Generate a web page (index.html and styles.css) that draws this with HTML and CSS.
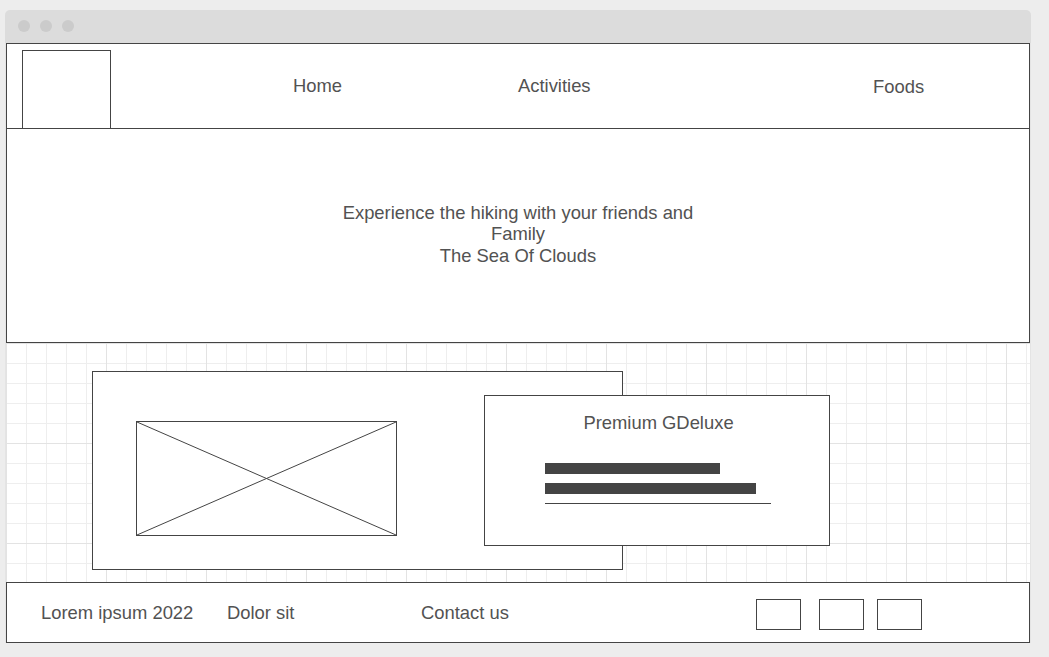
FILE: index.html
```html
<!DOCTYPE html>
<html lang="en">
<head>
<meta charset="utf-8">
<title>The Sea Of Clouds</title>
<link rel="stylesheet" href="styles.css">
</head>
<body>
<div class="window">
  <div class="titlebar">
    <span class="dot"></span><span class="dot"></span><span class="dot"></span>
  </div>
  <div class="canvas">
    <header class="header">
      <div class="logo"></div>
      <nav class="nav">
        <span class="nav-item nav-home">Home</span>
        <span class="nav-item nav-activities">Activities</span>
        <span class="nav-item nav-foods">Foods</span>
      </nav>
    </header>
    <section class="hero">
      <p class="hero-text">Experience the hiking with your friends and<br>Family<br>The Sea Of Clouds</p>
    </section>
    <section class="stage">
      <div class="feature">
        <div class="placeholder">
          <svg class="cross" viewBox="0 0 100 100" preserveAspectRatio="none">
            <line x1="0" y1="0" x2="100" y2="100" vector-effect="non-scaling-stroke"/>
            <line x1="100" y1="0" x2="0" y2="100" vector-effect="non-scaling-stroke"/>
          </svg>
        </div>
      </div>
      <div class="card">
        <h2 class="card-title">Premium GDeluxe</h2>
        <div class="bar bar-short"></div>
        <div class="bar bar-long"></div>
        <div class="rule"></div>
      </div>
    </section>
    <footer class="footer">
      <span class="foot-item foot-lorem">Lorem ipsum 2022</span>
      <span class="foot-item foot-dolor">Dolor sit</span>
      <span class="foot-item foot-contact">Contact us</span>
      <div class="social">
        <span class="social-box"></span>
        <span class="social-box"></span>
        <span class="social-box"></span>
      </div>
    </footer>
  </div>
</div>
</body>
</html>
```
FILE: styles.css
```css
html, body {
  margin: 0;
  background: #ededed;
}
body {
  padding-top: 10px;
  height: 657px;
  box-sizing: border-box;
  overflow: hidden;
  font-family: "Liberation Sans", Arial, sans-serif;
  color: #525252;
  font-size: 18.4px;
}
.window {
  margin-left: 5px;
  width: 1026px;
}
.titlebar {
  height: 33px;
  background: #dcdcdc;
  border-radius: 5px 5px 0 0;
  display: flex;
  align-items: flex-start;
  gap: 10px;
  padding: 10px 0 0 13px;
  box-sizing: border-box;
}
.dot {
  width: 12px;
  height: 12px;
  border-radius: 50%;
  background: #cbcbcb;
}
.canvas {
  border-left: 1px solid #e4e4e4;
  border-right: 1px solid #e4e4e4;
  background-color: #fff;
  background-image:
    linear-gradient(to right, #e3e3e3 1px, transparent 1px),
    linear-gradient(to bottom, #e3e3e3 1px, transparent 1px),
    linear-gradient(to right, #eeeeee 1px, transparent 1px),
    linear-gradient(to bottom, #eeeeee 1px, transparent 1px);
  background-size: 100px 100px, 100px 100px, 20px 20px, 20px 20px;
}
.header {
  height: 86px;
  box-sizing: border-box;
  border: 1px solid #444;
  background: #fff;
  display: flex;
  align-items: flex-start;
}
.logo {
  margin: 6px 0 0 15px;
  width: 89px;
  height: 78px;
  box-sizing: border-box;
  border: 1px solid #444;
  border-bottom: none;
  flex: none;
}
.nav {
  align-self: center;
  display: flex;
  line-height: 20px;
  margin-top: 1px;
}
.nav-item { flex: none; }
.nav-home { margin-left: 182px; width: 48px; }
.nav-activities { margin-left: 177px; width: 73px; }
.nav-foods { margin-left: 282px; padding-top: 1px; }
.hero {
  height: 214px;
  box-sizing: border-box;
  border: 1px solid #444;
  border-top: none;
  background: #fff;
  display: flex;
  align-items: center;
  justify-content: center;
}
.hero-text {
  margin: 0;
  text-align: center;
  line-height: 21.5px;
  padding-bottom: 3px;
}
.stage {
  height: 239px;
  box-sizing: border-box;
  display: flex;
  align-items: flex-start;
  padding: 28px 0 0 86px;
}
.feature {
  width: 531px;
  height: 199px;
  box-sizing: border-box;
  border: 1px solid #444;
  background: #fff;
  padding: 49px 0 0 43px;
  flex: none;
}
.placeholder {
  width: 261px;
  height: 115px;
  box-sizing: border-box;
  border: 1px solid #444;
}
.cross {
  display: block;
  width: 100%;
  height: 100%;
  stroke: #444;
  stroke-width: 1;
}
.card {
  position: relative;
  margin: 24px 0 0 -139px;
  width: 346px;
  height: 151px;
  box-sizing: border-box;
  border: 1px solid #444;
  background: #fff;
  padding-top: 17px;
  flex: none;
}
.card-title {
  margin: 0;
  padding-left: 3px;
  font-size: 18.4px;
  font-weight: normal;
  line-height: 20px;
  text-align: center;
}
.bar {
  height: 11px;
  background: #444;
  margin-left: 60px;
}
.bar-short { width: 175px; margin-top: 30px; }
.bar-long { width: 211px; margin-top: 9px; }
.rule {
  margin: 9px 0 0 60px;
  width: 226px;
  height: 1px;
  background: #444;
}
.footer {
  height: 61px;
  box-sizing: border-box;
  border: 1px solid #444;
  background: #fff;
  display: flex;
  align-items: center;
  padding-left: 34px;
  line-height: 20px;
}
.foot-item { flex: none; white-space: nowrap; }
.foot-lorem { width: 152px; }
.foot-dolor { margin-left: 34px; width: 68px; }
.foot-contact { margin-left: 126px; width: 88px; }
.social {
  display: flex;
  margin: 4px 0 0 247px;
}
.social-box {
  width: 45px;
  height: 31px;
  box-sizing: border-box;
  border: 1px solid #444;
}
.social-box:nth-child(1) { margin-right: 18px; }
.social-box:nth-child(2) { margin-right: 13px; }
```
